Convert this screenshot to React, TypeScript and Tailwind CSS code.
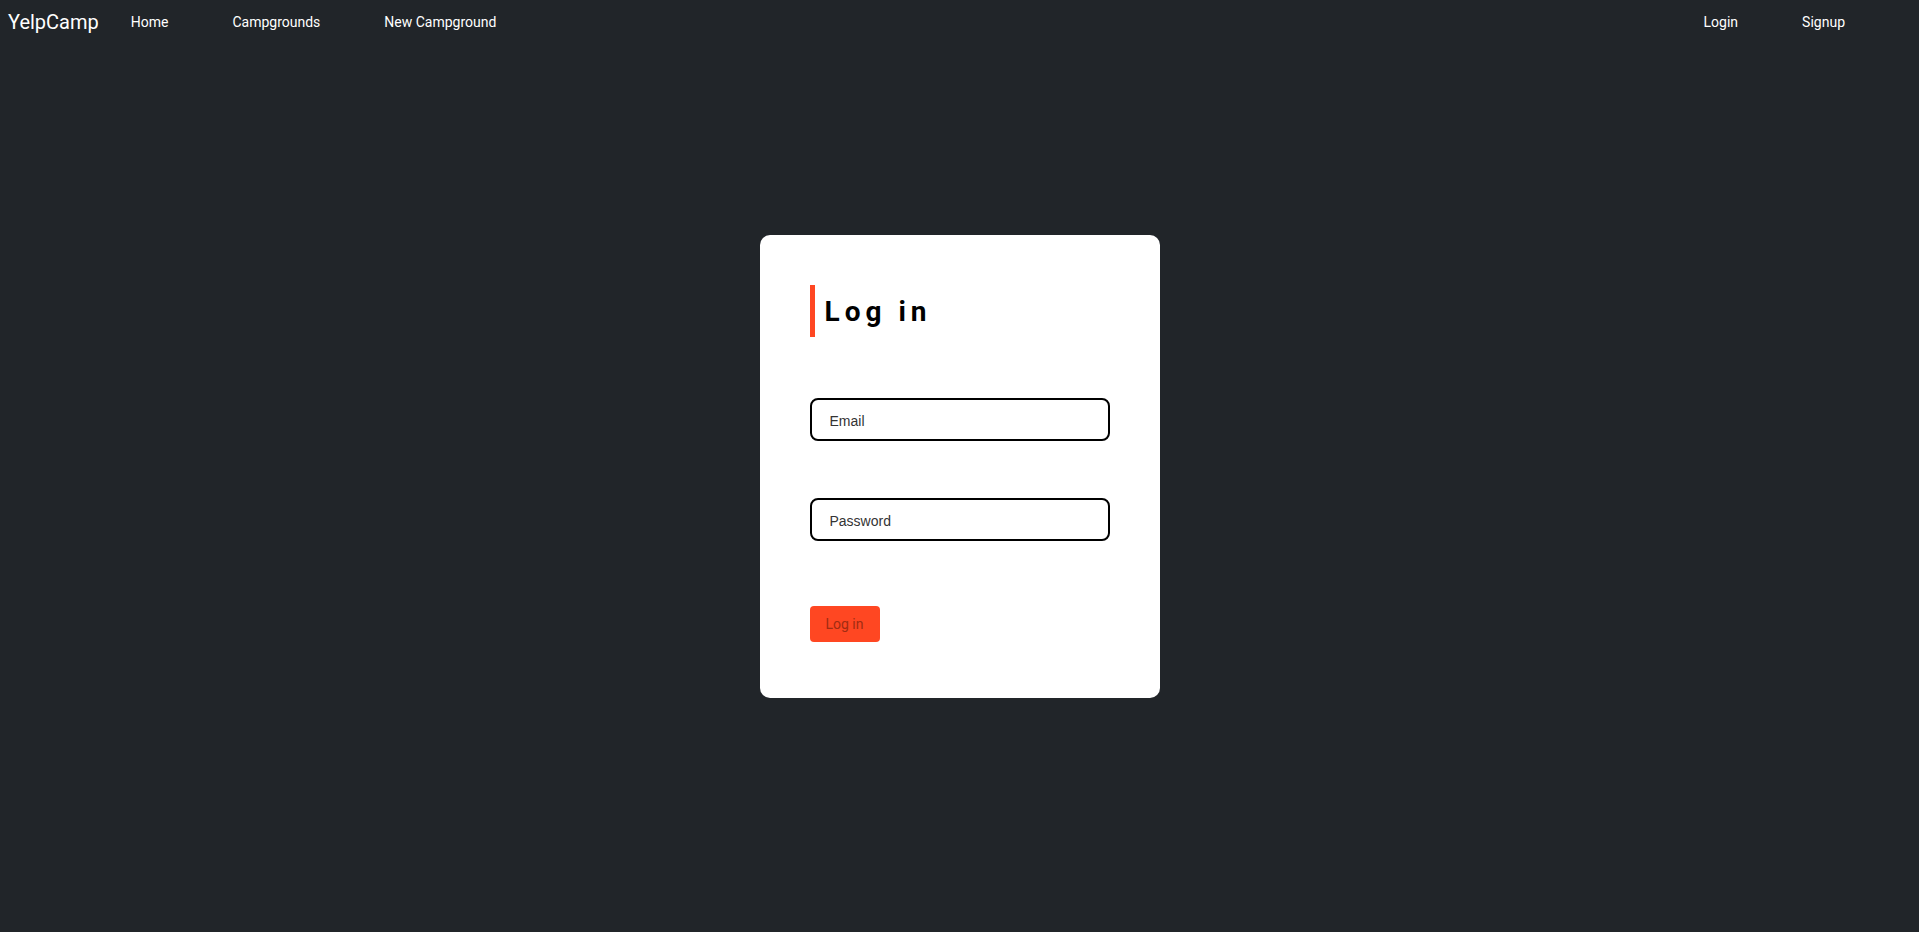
import React from "react";

export default function App() {
  return (
    <div className="min-h-screen bg-[#212529] flex flex-col" style={{ fontFamily: "Roboto, 'Liberation Sans', sans-serif" }}>
      <nav className="h-[44px] flex items-center text-white">
        <a className="ml-[8px] text-[20px] leading-none text-white">YelpCamp</a>
        <div className="flex items-center">
          <a className="px-[32px] text-[14px] text-white">Home</a>
          <a className="px-[32px] text-[14px] text-white">Campgrounds</a>
          <a className="px-[32px] text-[14px] text-white">New Campground</a>
        </div>
        <div className="ml-auto flex items-center mr-[42px]">
          <a className="px-[32px] text-[14px] text-white">Login</a>
          <a className="px-[32px] text-[14px] text-white">Signup</a>
        </div>
      </nav>
      <main className="flex-1 flex justify-center items-start pt-[191px]">
        <div className="w-[400px] bg-white rounded-[10px] p-[50px] pb-[56px] flex flex-col">
          <h3 className="h-[52px] flex items-center border-l-[5px] border-[#ff4722] pl-[10px] pt-[2px] text-[28px] font-bold tracking-[5px] text-black leading-none">
            Log in
          </h3>
          <input
            className="mt-[61px] h-[43px] w-[300px] border-2 border-black rounded-[8px] pl-[18px] pt-[3px] text-[14px] text-[#333] placeholder:text-[#333] outline-none"
            style={{ fontFamily: "'Liberation Sans', Arial, sans-serif" }}
            placeholder="Email"
          />
          <input
            type="password"
            className="mt-[57px] h-[43px] w-[300px] border-2 border-black rounded-[8px] pl-[18px] pt-[3px] text-[14px] text-[#333] placeholder:text-[#333] outline-none"
            style={{ fontFamily: "'Liberation Sans', Arial, sans-serif" }}
            placeholder="Password"
          />
          <button className="mt-[65px] w-[70px] h-[36px] rounded-[4px] bg-[#ff4722] text-[#a12c12] text-[14px]">
            Log in
          </button>
        </div>
      </main>
    </div>
  );
}
